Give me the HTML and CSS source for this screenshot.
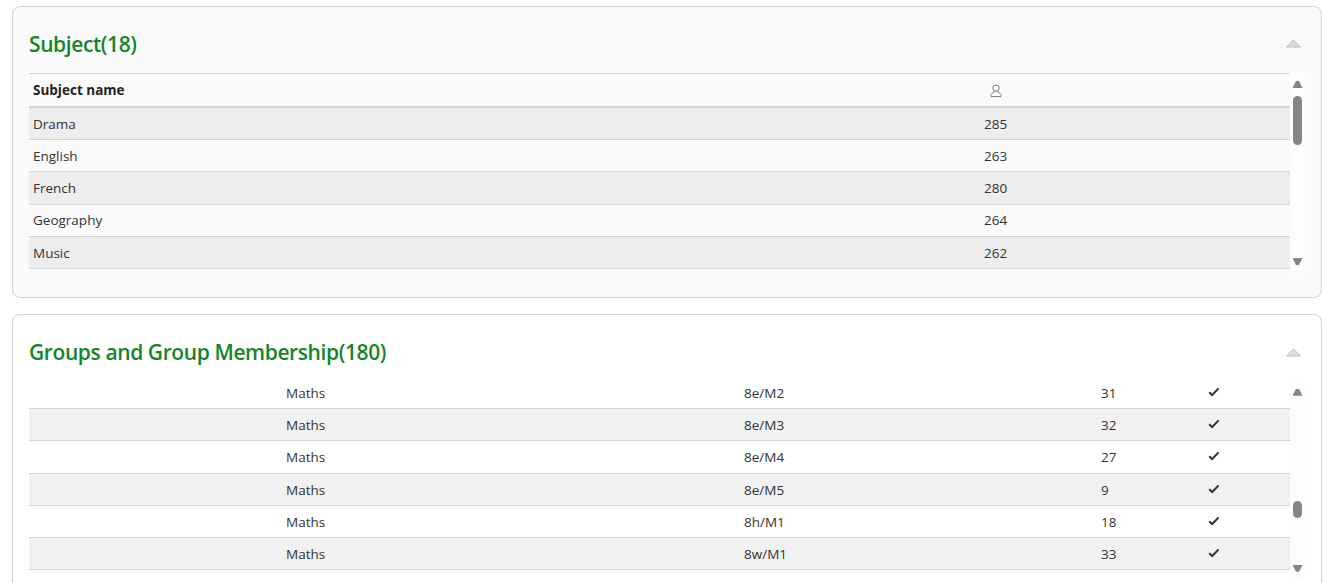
FILE: index.html
```html
<!DOCTYPE html>
<html lang="en">
<head>
<meta charset="utf-8">
<title>Subjects and groups</title>
<link rel="stylesheet" href="styles.css">
</head>
<body>
<section class="card card-subject">
  <header class="card-head">
    <h2 class="card-title">Subject(18)</h2>
    <svg class="collapse" width="15" height="9" viewBox="0 0 15 9"><path d="M7.5 1 14.5 8H.5Z" fill="#dcdcdc" stroke="#bdbdbd"/></svg>
  </header>
  <div class="table-wrap">
    <div class="table table-subject">
      <div class="row head">
        <div class="cell">Subject name</div>
        <div class="cell cell-icon"><svg width="12" height="14" viewBox="0 0 12 14" fill="none" stroke="#7d7d7d" stroke-width="1"><circle cx="6" cy="4.2" r="3.2"/><path d="M4.2 7 3.6 8.6C2 9 1 10 1 11.4V12.6H11V11.4C11 10 10 9 8.4 8.6L7.8 7"/></svg></div>
      </div>
      <div class="row odd"><div class="cell">Drama</div><div class="cell">285</div></div>
      <div class="row"><div class="cell">English</div><div class="cell">263</div></div>
      <div class="row odd"><div class="cell">French</div><div class="cell">280</div></div>
      <div class="row"><div class="cell">Geography</div><div class="cell">264</div></div>
      <div class="row odd"><div class="cell">Music</div><div class="cell">262</div></div>
    </div>
    <div class="scrollbar">
      <span class="arrow up"></span>
      <span class="thumb thumb-subject"></span>
      <span class="arrow down"></span>
    </div>
  </div>
</section>
<section class="card card-groups">
  <header class="card-head">
    <h2 class="card-title">Groups and Group Membership(180)</h2>
    <svg class="collapse" width="15" height="9" viewBox="0 0 15 9"><path d="M7.5 1 14.5 8H.5Z" fill="#dcdcdc" stroke="#bdbdbd"/></svg>
  </header>
  <div class="table-wrap">
    <div class="table table-groups">
      <div class="row"><div class="cell"></div><div class="cell">Maths</div><div class="cell">8e/M2</div><div class="cell">31</div><div class="cell"><svg class="tick" width="12" height="10" viewBox="0 0 12 10"><path d="M1.2 5.2 4.2 8 10.6 1.4" fill="none" stroke="#333" stroke-width="2"/></svg></div></div>
      <div class="row odd"><div class="cell"></div><div class="cell">Maths</div><div class="cell">8e/M3</div><div class="cell">32</div><div class="cell"><svg class="tick" width="12" height="10" viewBox="0 0 12 10"><path d="M1.2 5.2 4.2 8 10.6 1.4" fill="none" stroke="#333" stroke-width="2"/></svg></div></div>
      <div class="row"><div class="cell"></div><div class="cell">Maths</div><div class="cell">8e/M4</div><div class="cell">27</div><div class="cell"><svg class="tick" width="12" height="10" viewBox="0 0 12 10"><path d="M1.2 5.2 4.2 8 10.6 1.4" fill="none" stroke="#333" stroke-width="2"/></svg></div></div>
      <div class="row odd"><div class="cell"></div><div class="cell">Maths</div><div class="cell">8e/M5</div><div class="cell">9</div><div class="cell"><svg class="tick" width="12" height="10" viewBox="0 0 12 10"><path d="M1.2 5.2 4.2 8 10.6 1.4" fill="none" stroke="#333" stroke-width="2"/></svg></div></div>
      <div class="row"><div class="cell"></div><div class="cell">Maths</div><div class="cell">8h/M1</div><div class="cell">18</div><div class="cell"><svg class="tick" width="12" height="10" viewBox="0 0 12 10"><path d="M1.2 5.2 4.2 8 10.6 1.4" fill="none" stroke="#333" stroke-width="2"/></svg></div></div>
      <div class="row odd"><div class="cell"></div><div class="cell">Maths</div><div class="cell">8w/M1</div><div class="cell">33</div><div class="cell"><svg class="tick" width="12" height="10" viewBox="0 0 12 10"><path d="M1.2 5.2 4.2 8 10.6 1.4" fill="none" stroke="#333" stroke-width="2"/></svg></div></div>
    </div>
    <div class="scrollbar">
      <span class="arrow up"></span>
      <span class="thumb thumb-groups"></span>
      <span class="arrow down"></span>
    </div>
  </div>
</section>
</body>
</html>
```
FILE: styles.css
```css
* { box-sizing: border-box; }
html, body { height: 583px; overflow: hidden; }
body {
  margin: 0;
  padding: 6px 14px 0 12px;
  background: #fff;
  color: #333;
  font-family: "Open Sans", "Noto Sans", "Liberation Sans", sans-serif;
  font-size: 13.5px;
}
.card {
  border: 1px solid #d2d2d2;
  border-radius: 8px;
  padding: 0 16px;
}
.card-subject { background: #fafafa; height: 292px; margin-bottom: 16px; }
.card-groups { background: #fff; height: 300px; }
.card-head {
  display: flex;
  align-items: center;
  justify-content: space-between;
  height: 66px;
  padding-top: 7px;
}
.card-groups .card-head { height: 61.8px; padding-top: 13px; }
.card-title {
  margin: 0;
  color: #16842a;
  font-size: 21px;
  font-weight: 600;
  line-height: 28px;
  letter-spacing: -0.4px;
}
.collapse { margin-right: 4px; }
.table-wrap { display: flex; align-items: flex-start; }
.table { width: 1261px; }
.table-subject { border-top: 1px solid #d3d5da; }
.row {
  display: grid;
  align-items: center;
  height: 32.25px;
  border-bottom: 1px solid #d3d5da;
}
.table-subject .row { grid-template-columns: 951px 1fr; }
.table-groups .row { grid-template-columns: 253px 458px 357px 107px 1fr; }
.row.odd { background: #ededed; }
.table-groups .row.odd { background: #f1f1f1; }
.table-groups .cell { padding-top: 0.7px; }
.row.head {
  height: 33.9px;
  border-bottom-width: 2px;
  font-weight: 700;
  color: #222;
}
.cell { padding: 0 4px; white-space: nowrap; line-height: 18px; }
.cell-icon { padding-left: 10px; padding-top: 2px; }
.cell svg { display: block; }
.tick { margin-top: -2px; }
.scrollbar {
  width: 15px;
  background: #fdfdfd;
  display: flex;
  flex-direction: column;
  align-items: center;
  height: 200px;
}
.card-groups .scrollbar { height: 199px; margin-top: 4px; }
.arrow { width: 10px; height: 7px; background: #858585; }
.arrow.up { clip-path: polygon(35% 0, 65% 0, 100% 100%, 0 100%); margin-top: 8px; }
.arrow.down { clip-path: polygon(0 0, 100% 0, 65% 100%, 35% 100%); margin-top: auto; margin-bottom: 8px; }
.thumb { width: 9px; background: #858585; border-radius: 5px; }
.thumb-subject { height: 49px; margin-top: 8px; }
.thumb-groups { height: 17px; margin-top: 105px; }
```
